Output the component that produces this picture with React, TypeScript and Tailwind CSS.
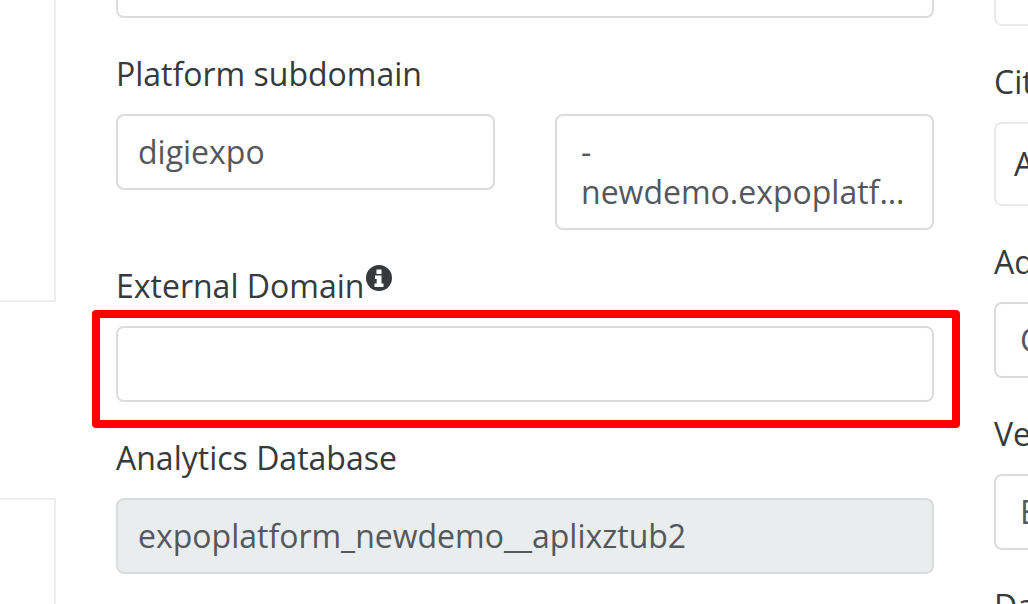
const inputClass =
  'flex h-[76px] shrink-0 items-center rounded-lg border-2 border-[#dcdcdc] px-5 text-[#54585c]'
const sideInputClass =
  'mt-[20px] flex h-[76px] w-[60px] shrink-0 items-center overflow-hidden rounded-l-lg border-y-2 border-l-2 border-[#dcdcdc] pl-6 text-[#54585c]'
const sideLabelClass = 'mt-[36px] h-10 shrink-0 whitespace-nowrap'

function InfoIcon() {
  return (
    <svg viewBox="0 0 26 26" className="mt-[-1px] ml-[2px] h-[26px] w-[26px] shrink-0">
      <circle cx="13" cy="13" r="13" fill="#373a3c" />
      <path
        fill="#ffffff"
        d="M10.5 4.5h5v4.5h-5zM9 10.5h6.5v8H17.5v3.5H8.5v-3.5h2.2v-4.5H9z"
      />
    </svg>
  )
}

export default function App() {
  return (
    <div className="flex h-[604px] w-[1028px] overflow-hidden bg-white font-['Open_Sans',sans-serif] text-[32px] leading-10 text-[#373a3c]">
      {/* left cards, cut off by the crop */}
      <div className="flex w-[56px] shrink-0 flex-col">
        <div className="h-[302px] shrink-0 border-r-2 border-b-2 border-[#eeeeee]" />
        <div className="mt-[196px] flex-1 border-t-2 border-r-2 border-[#eeeeee]" />
      </div>

      {/* main form column */}
      <div className="ml-[60px] flex w-[818px] shrink-0 flex-col">
        <div className="h-[18px] shrink-0 rounded-b-lg border-x-2 border-b-2 border-[#dcdcdc]" />

        <label className="mt-[36px] block h-10 shrink-0">Platform subdomain</label>
        <div className="mt-[20px] flex shrink-0 items-start justify-between">
          <div className={`${inputClass} w-[379px]`}>digiexpo</div>
          <div className="h-[116px] w-[379px] rounded-lg border-2 border-[#dcdcdc] px-6 py-[16px] text-[#54585c]">
            <span className="block">-</span>
            <span className="block truncate">newdemo.expoplatform.com</span>
          </div>
        </div>

        <label className="mt-[36px] flex h-10 shrink-0 items-start">
          External Domain
          <InfoIcon />
        </label>
        <div className="relative mt-[20px] shrink-0">
          <div className={inputClass} />
          <div className="absolute -top-4 -right-[26px] -bottom-[26px] -left-6 rounded-[4px] border-8 border-[#ff0000]" />
        </div>

        <label className="mt-[36px] block h-10 shrink-0">Analytics Database</label>
        <div className={`${inputClass} mt-[20px] bg-[#e9eded]`}>expoplatform_newdemo__aplixztub2</div>
      </div>

      {/* right column, cut off by the crop */}
      <div className="ml-[60px] flex flex-1 flex-col">
        <div className="h-[26px] w-[60px] shrink-0 rounded-bl-lg border-b-2 border-l-2 border-[#eaeaea]" />
        <span className={sideLabelClass}>City</span>
        <div className="mt-[20px] flex h-[84px] w-[60px] shrink-0 items-center overflow-hidden rounded-l-lg border-y-2 border-l-2 border-[#eaeaea] pl-[18px]">
          Afghanistan
        </div>
        <span className={sideLabelClass}>Address</span>
        <div className={sideInputClass}>Content</div>
        <span className={sideLabelClass}>Venue</span>
        <div className={sideInputClass}>Expo</div>
        <span className={sideLabelClass}>Date</span>
      </div>
    </div>
  )
}
